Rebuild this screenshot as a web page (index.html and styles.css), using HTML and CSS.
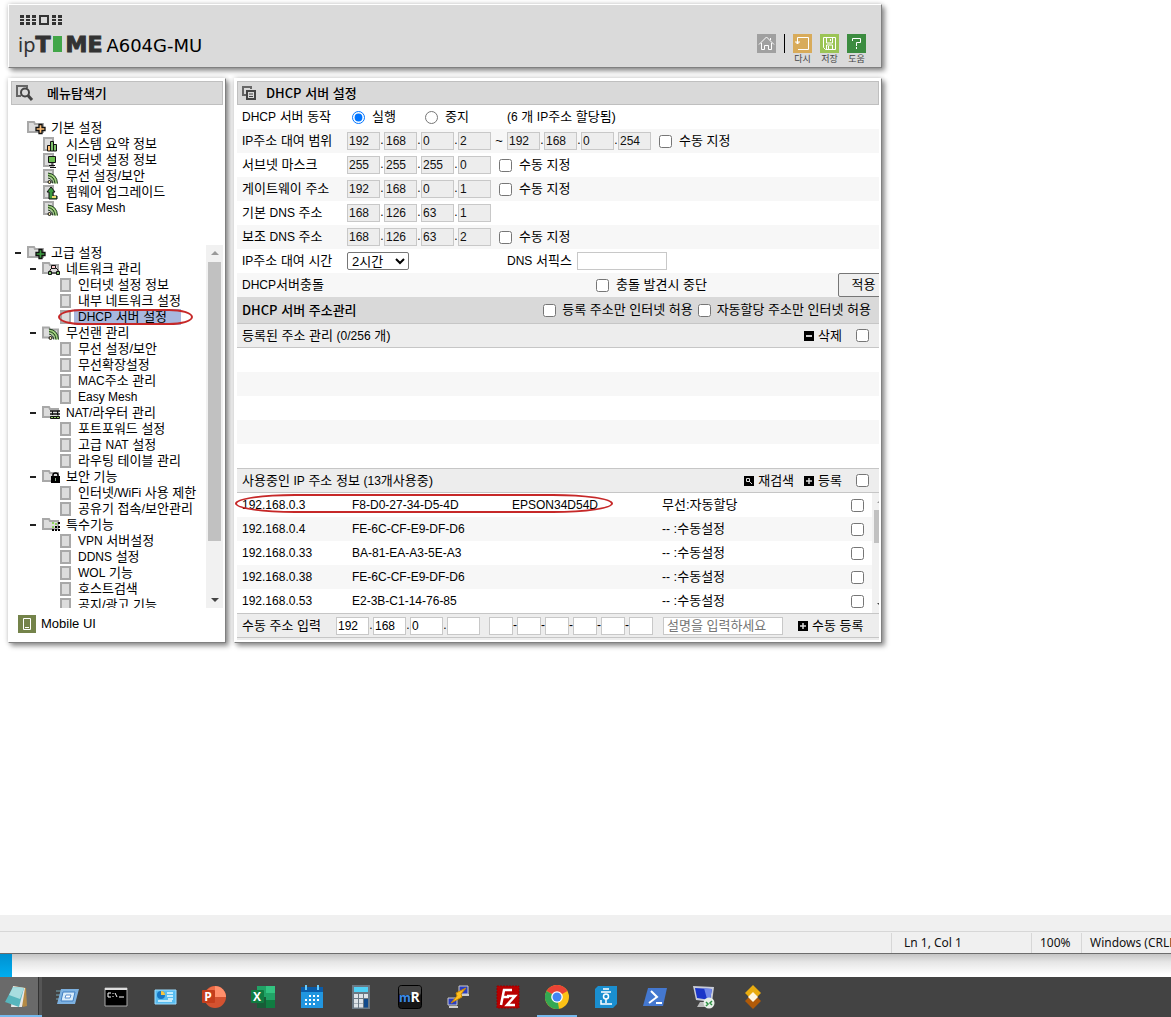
FILE: index.html
```html
<!DOCTYPE html>
<html lang="ko">
<head>
<meta charset="utf-8">
<title>ipTIME A604G-MU</title>
<link rel="stylesheet" href="styles.css">
</head>
<body>
<svg class="defs" aria-hidden="true">
  <defs>
    <symbol id="page" viewBox="0 0 11 14"><path d="M1 1h9v12H1z" fill="#dcdcdc" stroke="#a8a8a8" stroke-width="2"/></symbol>
    <symbol id="folder" viewBox="0 0 20 14"><path d="M1 1h6l1 2h8v8H1z" fill="#dcdcdc" stroke="#a8a8a8" stroke-width="2"/></symbol>
    <symbol id="sheet" viewBox="0 0 20 15"><path d="M2 1h9v12H2z" fill="#dcdcdc" stroke="#a8a8a8" stroke-width="2"/></symbol>
    <symbol id="waves" viewBox="0 0 20 15"><path d="M6 4q9 1 9.500 10.500H12Q11 9 6 8z" fill="#9fd07c"/><path d="M6 4q9 1 9.500 10.500M6 6.500q6.500 1 7 8M6 9q4.500 1 4.800 5.500" fill="none" stroke="#1c3a1c" stroke-width="1"/><circle cx="7.500" cy="13" r="1.500" fill="#f0e0a0" stroke="#111"/></symbol>
    <symbol id="plus" viewBox="0 0 20 14"><path d="M12 3.500h3v3h3v3h-3v3h-3v-3H9v-3h3z" stroke="#111" stroke-width="1.300"/></symbol>
    <symbol id="plusbox" viewBox="0 0 10 10"><path d="M0 0h10v10H0z" fill="#000"/><path d="M5 2v6M2 5h6" stroke="#ddd" stroke-width="1.500"/></symbol>
  </defs>
</svg>

<main class="desktop">
  <div class="router">
    <header class="top panel">
      <div class="brand">
        <svg class="dots" width="44" height="12" viewBox="0 0 44 12" fill="#333"><path d="M0 1h4v3H0zM6 1h4v3H6zM12 1h4v3h-4zM0 5h4v2H0zM6 5h4v2H6zM12 5h4v2h-4zM0 8h4v3H0zM6 8h4v3H6zM12 8h4v3h-4zM32 1h4v3h-4zM38 1h4v3h-4zM32 5h4v2h-4zM38 5h4v2h-4zM32 8h4v3h-4zM38 8h4v3h-4z"/><path d="M20 2h8v8h-8z" fill="none" stroke="#333" stroke-width="2"/></svg>
        <h1 class="logo"><span class="ip">ip</span><span class="time">T<span class="stem"></span>ME</span><span class="model">A604G-MU</span></h1>
      </div>
      <nav class="tools">
        <a href="#home" aria-label="홈"><svg width="19" height="19" viewBox="0 0 19 19" fill="none" stroke="#fff"><path d="M0 0h19v19H0z" fill="#a0a0a0" stroke="none"/><path d="M2 10.500 9.500 3l7.500 7.500M13.500 6V4M4.500 9v6.500h3v-4h4v4h3V9"/></svg></a>
        <span class="divider"></span>
        <a href="#refresh"><svg width="19" height="19" viewBox="0 0 19 19" fill="none" stroke="#fff"><path d="M0 0h19v19H0z" fill="#d8ab5a" stroke="none"/><path d="M4.500 10V3.500h11v12H5M2 8h5M3 9h3"/></svg>다시</a>
        <a href="#save"><svg width="19" height="19" viewBox="0 0 19 19" fill="none" stroke="#fff"><path d="M0 0h19v19H0z" fill="#9bc455" stroke="none"/><path d="M3.500 3.500h12v12h-10l-2-2zM6.500 4v5h6V4M6.500 15v-4h6v4M10.500 5v2M8.500 12v3"/></svg>저장</a>
        <a href="#help"><svg width="19" height="19" viewBox="0 0 19 19" fill="none" stroke="#fff"><path d="M0 0h19v19H0z" fill="#3c8c40" stroke="none"/><path d="M5.500 7V4.500h8v4h-4V12M9.500 13v2"/></svg>도움</a>
      </nav>
    </header>

    <div class="columns">
      <aside class="side panel">
        <h2 class="title"><svg width="18" height="16" viewBox="0 0 18 16" fill="none" stroke="#444" stroke-width="2"><path d="M5 11H1V1h10v2" stroke="#666"/><circle cx="9" cy="7.500" r="4"/><path d="m12 10.500 4 4.500" stroke-width="3"/></svg><span>메뉴탐색기</span></h2>
        <ul class="tree basic">
          <li class="root"><a href="#basic"><svg width="20" height="14"><use href="#folder"/><use href="#plus" fill="#ffc078"/></svg>기본 설정</a></li>
          <li class="mid"><a href="#summary"><svg width="20" height="15"><use href="#sheet"/><path d="M5.500 8.500h3V14h-3z" fill="#ffc078" stroke="#111"/><path d="M8.500 4.500h3V14h-3zM11.500 7.500h3V14h-3z" fill="#7dc06a" stroke="#111"/></svg>시스템 요약 정보</a></li>
          <li class="mid"><a href="#inet"><svg width="20" height="15"><use href="#sheet"/><path d="M6.500 3.500h7v6h-7z" fill="#6cbf50" stroke="#111"/><path d="M10 10v2M7 12.500h6M8 14.500h6" stroke="#111"/></svg>인터넷 설정 정보</a></li>
          <li class="mid"><a href="#wifi"><svg width="20" height="15"><use href="#sheet"/><use href="#waves"/></svg>무선 설정/보안</a></li>
          <li class="mid"><a href="#fw"><svg width="20" height="15"><use href="#sheet"/><path d="m9 2 4 5h-2v4h4v3H7V7H5z" fill="#3c9a40" stroke="#111"/><path d="M10 11h4v2h-4z" fill="#f0dc70"/></svg>펌웨어 업그레이드</a></li>
          <li class="mid"><a href="#mesh"><svg width="20" height="15"><use href="#sheet"/><use href="#waves"/></svg><span class="en">Easy Mesh</span></a></li>
        </ul>
        <div class="scroll">
          <ul class="tree">
            <li class="root"><i></i><a href="#adv"><svg width="20" height="14"><use href="#folder"/><use href="#plus" fill="#3c9a40"/></svg>고급 설정</a></li>
            <li class="mid"><i></i><a href="#net"><svg width="20" height="14"><use href="#folder"/><path d="M9.500 3.500h4v3h-4zM8 11V8l2-2M16 11V8l-2-2M9 11h6" fill="#fcc" stroke="#111"/><path d="M6.500 9.500h3v3h-3zM14.500 9.500h3v3h-3z" fill="#7dc06a" stroke="#111"/></svg>네트워크 관리</a></li>
            <li class="leaf"><a href="#a1"><svg width="11" height="14"><use href="#page"/></svg>인터넷 설정 정보</a></li>
            <li class="leaf"><a href="#a2"><svg width="11" height="14"><use href="#page"/></svg>내부 네트워크 설정</a></li>
            <li class="leaf current"><a href="#a3"><svg width="11" height="14"><use href="#page"/></svg><span class="pick"><span class="en">DHCP</span> 서버 설정</span></a><span class="ring"></span></li>
            <li class="mid"><i></i><a href="#wl"><svg width="20" height="15"><use href="#folder"/><use href="#waves" x="1" y="-1"/></svg>무선랜 관리</a></li>
            <li class="leaf"><a href="#b1"><svg width="11" height="14"><use href="#page"/></svg>무선 설정/보안</a></li>
            <li class="leaf"><a href="#b2"><svg width="11" height="14"><use href="#page"/></svg>무선확장설정</a></li>
            <li class="leaf"><a href="#b3"><svg width="11" height="14"><use href="#page"/></svg><span><span class="en">MAC</span>주소 관리</span></a></li>
            <li class="leaf"><a href="#b4"><svg width="11" height="14"><use href="#page"/></svg><span class="en">Easy Mesh</span></a></li>
            <li class="mid"><i></i><a href="#nat"><svg width="20" height="14"><use href="#folder"/><path d="M8 5h10M8 8h10" stroke="#111" stroke-width="1.500"/><path d="M10.500 5v4M15.500 5v4" stroke="#111"/><path d="M8.500 10.500h3v2h-3zM11.500 10.500h3v2h-3zM14.500 10.500h3v2h-3z" fill="#8fd060" stroke="#111"/></svg><span><span class="en">NAT/</span>라우터 관리</span></a></li>
            <li class="leaf"><a href="#c1"><svg width="11" height="14"><use href="#page"/></svg>포트포워드 설정</a></li>
            <li class="leaf"><a href="#c2"><svg width="11" height="14"><use href="#page"/></svg><span>고급 <span class="en">NAT</span> 설정</span></a></li>
            <li class="leaf"><a href="#c3"><svg width="11" height="14"><use href="#page"/></svg>라우팅 테이블 관리</a></li>
            <li class="mid"><i></i><a href="#sec"><svg width="20" height="14"><use href="#folder"/><path d="M9 6h9v7H9z"/><path d="M11 7V5q0-2 2.500-2T16 5v2" fill="none" stroke="#000" stroke-width="1.500"/><path d="M13.500 8v3" stroke="#8a8"/></svg>보안 기능</a></li>
            <li class="leaf"><a href="#d1"><svg width="11" height="14"><use href="#page"/></svg><span>인터넷<span class="en">/WiFi</span> 사용 제한</span></a></li>
            <li class="leaf"><a href="#d2"><svg width="11" height="14"><use href="#page"/></svg>공유기 접속/보안관리</a></li>
            <li class="mid"><i></i><a href="#sp"><svg width="20" height="14"><use href="#folder"/><path d="M10 4h2v2h-2zM10 8h2v2h-2zM13 5h2v2h-2z" fill="#8fd060"/><path d="M16 4h2v2h-2zM13 8h2v2h-2zM16 8h2v2h-2zM10 11h2v2h-2zM13 11h2v2h-2zM16 11h2v2h-2z"/></svg>특수기능</a></li>
            <li class="leaf"><a href="#e1"><svg width="11" height="14"><use href="#page"/></svg><span><span class="en">VPN</span> 서버설정</span></a></li>
            <li class="leaf"><a href="#e2"><svg width="11" height="14"><use href="#page"/></svg><span><span class="en">DDNS</span> 설정</span></a></li>
            <li class="leaf"><a href="#e3"><svg width="11" height="14"><use href="#page"/></svg><span><span class="en">WOL</span> 기능</span></a></li>
            <li class="leaf"><a href="#e4"><svg width="11" height="14"><use href="#page"/></svg>호스트검색</a></li>
            <li class="leaf"><a href="#e5"><svg width="11" height="14"><use href="#page"/></svg>공지/광고 기능</a></li>
          </ul>
          <div class="scrollbar"><span class="up"></span><span class="thumb"></span><span class="down"></span></div>
        </div>
        <a class="mobile" href="#mobile"><svg width="18" height="18" viewBox="0 0 18 18"><path d="M0 0h18v18H0z" fill="#74834a"/><path d="M5.500 3.500h7v11h-7zM7 12.500h4" fill="none" stroke="#fff"/></svg>Mobile UI</a>
      </aside>

      <section class="content panel">
        <h2 class="title"><svg width="14" height="14" viewBox="0 0 14 14" fill="none" stroke="#444" stroke-width="2"><path d="M4 9H1V1h8v2" stroke="#666"/><path d="M5 5h8v8H5z"/><path d="M7 8h4M7 10.500h4" stroke-width="1"/></svg><span>DHCP 서버 설정</span></h2>
        <form class="body">
          <div class="row">
            <span class="label"><span class="en">DHCP</span> 서버 동작</span>
            <label class="radio"><input type="radio" name="run" checked>실행</label>
            <label class="radio"><input type="radio" name="run">중지</label>
            <span class="note"><span class="en">(6</span> 개 <span class="en">IP</span>주소 할당됨)</span>
          </div>
          <div class="row alt">
            <span class="label"><span class="en">IP</span>주소 대여 범위</span>
            <span class="ip4"><input aria-label="시작 1" value="192" disabled>.<input aria-label="시작 2" value="168" disabled>.<input aria-label="시작 3" value="0" disabled>.<input aria-label="시작 4" value="2" disabled></span>
            <span class="tilde">~</span>
            <span class="ip4"><input aria-label="끝 1" value="192" disabled>.<input aria-label="끝 2" value="168" disabled>.<input aria-label="끝 3" value="0" disabled>.<input aria-label="끝 4" value="254" disabled></span>
            <label class="check"><input type="checkbox">수동 지정</label>
          </div>
          <div class="row">
            <span class="label">서브넷 마스크</span>
            <span class="ip4"><input aria-label="마스크 1" value="255" disabled>.<input aria-label="마스크 2" value="255" disabled>.<input aria-label="마스크 3" value="255" disabled>.<input aria-label="마스크 4" value="0" disabled></span>
            <label class="check"><input type="checkbox">수동 지정</label>
          </div>
          <div class="row alt">
            <span class="label">게이트웨이 주소</span>
            <span class="ip4"><input aria-label="게이트웨이 1" value="192" disabled>.<input aria-label="게이트웨이 2" value="168" disabled>.<input aria-label="게이트웨이 3" value="0" disabled>.<input aria-label="게이트웨이 4" value="1" disabled></span>
            <label class="check"><input type="checkbox">수동 지정</label>
          </div>
          <div class="row">
            <span class="label">기본 <span class="en">DNS</span> 주소</span>
            <span class="ip4"><input aria-label="기본 DNS 1" value="168" disabled>.<input aria-label="기본 DNS 2" value="126" disabled>.<input aria-label="기본 DNS 3" value="63" disabled>.<input aria-label="기본 DNS 4" value="1" disabled></span>
          </div>
          <div class="row alt">
            <span class="label">보조 <span class="en">DNS</span> 주소</span>
            <span class="ip4"><input aria-label="보조 DNS 1" value="168" disabled>.<input aria-label="보조 DNS 2" value="126" disabled>.<input aria-label="보조 DNS 3" value="63" disabled>.<input aria-label="보조 DNS 4" value="2" disabled></span>
            <label class="check"><input type="checkbox">수동 지정</label>
          </div>
          <div class="row">
            <label class="label" for="lease"><span class="en">IP</span>주소 대여 시간</label>
            <span class="lease"><select id="lease"><option>2시간</option></select></span>
            <label class="suffix"><span><span class="en">DNS</span> 서픽스</span><input type="text"></label>
          </div>
          <div class="row alt">
            <span class="label wide"><span class="en">DHCP</span>서버충돌</span>
            <label class="check"><input type="checkbox">충돌 발견시 중단</label>
            <div class="apply-box"><button class="apply" type="button">적용</button></div>
          </div>

          <div class="row section">
            <h3>DHCP 서버 주소관리</h3>
            <label class="check"><input type="checkbox">등록 주소만 인터넷 허용</label>
            <label class="check"><input type="checkbox">자동할당 주소만 인터넷 허용</label>
          </div>
          <div class="row bar">
            <span class="grow">등록된 주소 관리 <span class="en">(0/256</span> 개)</span>
            <button class="act" type="button"><svg width="10" height="10"><path d="M0 0h10v10H0z"/><path d="M2 5h6" stroke="#ccc" stroke-width="2"/></svg>삭제</button>
            <input type="checkbox" aria-label="모두 선택">
          </div>
          <div class="empty"></div>
          <div class="row bar lined">
            <span class="grow">사용중인 <span class="en">IP</span> 주소 정보 <span class="en">(13</span>개사용중)</span>
            <button class="act" type="button"><svg width="10" height="10"><path d="M0 0h10v10H0z"/><path d="M2.500 2.500h3v3h-3zM5 5l3 3" stroke="#ddd" fill="none"/></svg>재검색</button>
            <button class="act" type="button"><svg width="10" height="10"><use href="#plusbox"/></svg>등록</button>
            <input type="checkbox" aria-label="모두 선택">
          </div>
          <div class="leases">
            <table>
              <tr><td>192.168.0.3</td><td>F8-D0-27-34-D5-4D</td><td>EPSON34D54D</td><td class="ko">무선:자동할당</td><td><input type="checkbox" aria-label="192.168.0.3"></td></tr>
              <tr><td>192.168.0.4</td><td>FE-6C-CF-E9-DF-D6</td><td></td><td class="ko"><span class="en">--</span> :수동설정</td><td><input type="checkbox" aria-label="192.168.0.4"></td></tr>
              <tr><td>192.168.0.33</td><td>BA-81-EA-A3-5E-A3</td><td></td><td class="ko"><span class="en">--</span> :수동설정</td><td><input type="checkbox" aria-label="192.168.0.33"></td></tr>
              <tr><td>192.168.0.38</td><td>FE-6C-CF-E9-DF-D6</td><td></td><td class="ko"><span class="en">--</span> :수동설정</td><td><input type="checkbox" aria-label="192.168.0.38"></td></tr>
              <tr><td>192.168.0.53</td><td>E2-3B-C1-14-76-85</td><td></td><td class="ko"><span class="en">--</span> :수동설정</td><td><input type="checkbox" aria-label="192.168.0.53"></td></tr>
            </table>
            <div class="scrollbar slim"><span class="up"></span><span class="thumb"></span><span class="down"></span></div>
            <span class="ring"></span>
          </div>
          <div class="row manual">
            <span class="label">수동 주소 입력</span>
            <span class="ip4"><input aria-label="IP 1" value="192">.<input aria-label="IP 2" value="168">.<input aria-label="IP 3" value="0">.<input aria-label="IP 4"></span>
            <span class="mac"><input aria-label="MAC 1">-<input aria-label="MAC 2">-<input aria-label="MAC 3">-<input aria-label="MAC 4">-<input aria-label="MAC 5">-<input aria-label="MAC 6"></span>
            <input class="desc" type="text" aria-label="설명" placeholder="설명을 입력하세요">
            <button class="act" type="button"><svg width="10" height="10"><use href="#plusbox"/></svg>수동 등록</button>
          </div>
          <div class="base"></div>
        </form>
      </section>
    </div>
  </div>
</main>

<footer class="notepad">
  <div class="status"><span class="pos">Ln 1, Col 1</span><span class="zoom">100%</span><span class="eol">Windows (CRLF)</span></div>
</footer>
<div class="wallpaper"><span></span></div>

<nav class="taskbar" aria-label="작업 표시줄">
  <button class="first" aria-label="메모장"><svg viewBox="0 0 24 24"><path d="m8 2 13 2 1 18-4 1z" fill="#b58a45"/><path d="m8 2 12 2-3 19H6z" fill="#e8e8e8"/><path d="M8 3 0 18l14 5 5-19z" fill="#57b5bd"/><path d="M8 3 4 11l11 4 4-11z" fill="#a8dde0"/></svg></button>
  <button aria-label="실행"><svg viewBox="0 0 24 24"><path d="M1 6h6M1 10h5M1 14h4" stroke="#7ab"/><path d="M6 4h18l-4 15H2z" fill="#7db1e0"/><path d="M8 7h12l-2 9H6z" fill="#d8ecfa" stroke="#3f7dc0"/><path d="M11 10h5l-1 3h-5z" fill="#fff" stroke="#5a8fd0"/></svg></button>
  <button aria-label="명령 프롬프트"><svg viewBox="0 0 24 24"><path d="M1 3h22v18H1z" fill="#000" stroke="#aaa"/><path d="M1 3h22v2H1z" fill="#ddd"/><path d="M7 8H4v4h3M9 8v1m0 2v1M11 8l2 4M15 12h5" fill="none" stroke="#fff"/></svg></button>
  <button aria-label="제어판"><svg viewBox="0 0 24 24"><path d="M2 5h21v14H2z" fill="#58bcf0" stroke="#9bdcff"/><circle cx="8" cy="10" r="4" fill="#1676c4"/><path d="M8 10V6a4 4 0 0 1 4 4z" fill="#f5c542"/><path d="M14 8h6M14 11h6M15 14h5M5 16h14" stroke="#e8faff" stroke-width="1.500"/></svg></button>
  <button aria-label="PowerPoint"><svg viewBox="0 0 24 24"><circle cx="13" cy="12" r="11" fill="#d35230"/><path d="M13 1a11 11 0 0 1 11 11H13z" fill="#ff8f6b"/><path d="M13 1v11H3A11 11 0 0 1 13 1" fill="#ed6c47"/><rect y="5" width="13" height="13" rx="1" fill="#c43e1c"/><text x="6" y="16" class="glyph">P</text></svg></button>
  <button aria-label="Excel"><svg viewBox="0 0 24 24"><path d="M6 1h18v22H6z" fill="#21a366"/><path d="M15 1h9v7h-9z" fill="#33c481"/><path d="M6 12h9v11H6z" fill="#185c37"/><path d="M15 15h9v8h-9z" fill="#107c41"/><rect y="5" width="13" height="13" rx="1" fill="#107c41"/><text x="6" y="16" class="glyph">X</text></svg></button>
  <button aria-label="일정"><svg viewBox="0 0 24 24"><path d="M1 2h22v21H1z" fill="#2196e0"/><path d="M1 2h22v5H1z" fill="#0b5ca8"/><path d="M6 0v5M18 0v5" stroke="#6cf" stroke-width="2"/><path d="M9 11h11M5 15h15M5 19h11" stroke="#fff" stroke-width="2" stroke-dasharray="2 2"/></svg></button>
  <button aria-label="계산기"><svg viewBox="0 0 24 24"><path d="M3 0h18v24H3z" fill="#6a7884"/><path d="M5 2h14v5H5z" fill="#50d0f5"/><path d="M5 11h4m1 0h4m1 0h4M5 16h4m1 0h4M5 20.500h4m1 0h4" stroke="#dde3e8" stroke-width="4"/><path d="M15 14h4v8.500h-4z" fill="#104a8c"/></svg></button>
  <button aria-label="mRemote"><svg viewBox="0 0 24 24"><rect x=".5" y=".5" width="23" height="23" rx="3" fill="#161616" stroke="#000"/><rect x="1" y="1" width="22" height="9" rx="2" fill="#444"/><text x="7" y="17" class="glyph blue">m</text><text x="17" y="17" class="glyph big">R</text></svg></button>
  <button aria-label="PuTTY"><svg viewBox="0 0 24 24"><path d="M12 1h9v8h-9zM1 13h9v7H1z" fill="#2b3fc0" stroke="#ccc"/><path d="M13 10h9M2 22h9" stroke="#ccc" stroke-width="2"/><path d="m19 3-10 5 1 3-6 7 11-6-1-3z" fill="#ffc020" stroke="#c80"/></svg></button>
  <button aria-label="FileZilla"><svg viewBox="0 0 24 24"><path d="M1 1h22v22H1z" fill="#b80000" stroke="#900" stroke-dasharray="2 1"/><path d="m5 20 3-15h8M7 12h6M11 11h8l-8 9h8" fill="none" stroke="#fff" stroke-width="2.500"/></svg></button>
  <button class="open" aria-label="Chrome"><svg viewBox="0 0 24 24"><circle cx="12" cy="12" r="12" fill="#fbc116"/><path d="M12 12 1.600 6A12 12 0 0 1 22.400 6z" fill="#ea4335"/><path d="m12 12 2 11.800A12 12 0 0 1 1.600 6z" fill="#34a853"/><circle cx="12" cy="12" r="5.800" fill="#fff"/><circle cx="12" cy="12" r="4.500" fill="#4285f4"/></svg></button>
  <button aria-label="한글"><svg viewBox="0 0 24 24"><path d="M4 1h19v18l-4 4H1V4z" fill="#1a8fd0"/><path d="M9 4h6M7 7h10M12 14v4M7 15v4h11" fill="none" stroke="#fff" stroke-width="1.500"/><circle cx="12" cy="11.500" r="2.500" fill="none" stroke="#fff" stroke-width="1.500"/></svg></button>
  <button aria-label="PowerShell"><svg viewBox="0 0 24 24"><path d="M5 3h19l-4 18H0z" fill="#4478d0"/><path d="m8 6 6 6-8 6M13 18h6" fill="none" stroke="#fff" stroke-width="2"/></svg></button>
  <button aria-label="원격 데스크톱"><svg viewBox="0 0 24 24"><path d="m1 1 21 1-2 15-16-2z" fill="#c8ccd8"/><path d="m3 3 17 1-2 11-13-2z" fill="#1a35c8"/><path d="m12 3 8 1-2 11-3-1z" fill="#7088e8"/><path d="M8 17h7l3 5H5z" fill="#bbb"/><circle cx="17" cy="18" r="5.500" fill="#e8f0e8"/><path d="m14 17 2 2-2 2m6-5-2 2 2 2" fill="none" stroke="#2a9040" stroke-width="1.500"/></svg></button>
  <button aria-label="VMware"><svg viewBox="0 0 24 24"><path d="m12 8 8 8-8 8-8-8z" fill="#b05a08"/><path d="m12 0 8 8-8 8-8-8z" fill="#e8ac10"/><path d="m12 7 5 5-5 5-5-5z" fill="#fff8e0"/></svg></button>
</nav>
</body>
</html>
```
FILE: styles.css
```css
* { box-sizing: border-box; }

body {
  margin: 0;
  min-height: 100vh;
  display: flex;
  flex-direction: column;
  overflow-x: hidden;
  background: #fff;
  color: #000;
  font: 13px/16px "Liberation Sans", "Noto Sans CJK KR", sans-serif;
}

.defs { position: absolute; width: 0; height: 0; }
a { color: inherit; text-decoration: none; }
ul { list-style: none; margin: 0; padding: 0; }
svg { flex: none; }
input, select, button { font: inherit; color: inherit; }
input[type="checkbox"], input[type="radio"] { width: 13px; height: 13px; margin: 0; flex: none; }
.en { font-size: 12px; }

/* Router admin page */
.desktop { flex: 1; padding: 4px 8px 0; }
.router { max-width: 874px; display: flex; flex-direction: column; gap: 10px; }
.columns { display: flex; gap: 8px; }

.panel {
  border: 1px solid;
  border-color: #fff #808080 #808080 #fff;
  box-shadow: 0 0 5px rgba(0, 0, 0, .2), 3px 3px 5px rgba(0, 0, 0, .4);
}

.top {
  display: flex;
  justify-content: space-between;
  align-items: flex-start;
  padding: 9px 15px 2px 11px;
  background: #dadada;
}
.brand { display: flex; flex-direction: column; gap: 7px; }
.logo { display: flex; align-items: baseline; margin: 0 0 0 -2px; font-weight: 400; color: #333; line-height: 24px; }
.ip { font: 20px/24px "Noto Sans", sans-serif; }
.time { font: 700 22px/24px "DejaVu Sans", sans-serif; -webkit-text-stroke: 1px #333; }
.stem { display: inline-block; width: 9px; height: 16px; margin: 0 3px; background: #42a648; }
.model { font: 18px/24px "DejaVu Sans", sans-serif; color: #000; margin-left: 4px; }
.tools { display: flex; gap: 8px; padding-top: 20px; color: #444; font-size: 9px; line-height: 12px; }
.tools a { display: flex; flex-direction: column; align-items: center; }
.divider { width: 1px; height: 19px; background: #000; }

.side, .content { background: #fff; padding: 2px; }
.side { flex: 0 0 218px; }
.content { flex: 1; min-width: 0; }

.title {
  display: flex;
  align-items: center;
  height: 24px;
  margin: 0;
  padding-left: 4px;
  border: 1px solid #bfbfbf;
  background: #d9d9d9;
  font: 500 13px/16px "Noto Sans CJK KR", sans-serif;
}
.side .title { gap: 13px; }
.content .title { gap: 10px; }

/* Menu tree */
.tree li { display: flex; align-items: center; height: 16px; position: relative; white-space: nowrap; }
.tree i { width: 6px; height: 2px; margin-right: 6px; background: #222; }
.tree a { display: flex; align-items: center; gap: 4px; }
.tree .root { padding-left: 4px; }
.tree .mid { padding-left: 19px; }
.tree .leaf { padding-left: 49px; }
.tree .leaf a { gap: 7px; }
.tree.basic { padding: 15px 0 29px; }
.tree.basic .root { padding-left: 16px; }
.tree.basic .mid { padding-left: 31px; }
.pick { background: #a8b8de; padding: 0 14px 0 4px; margin-left: -4px; }
.ring { position: absolute; border: 2px solid #c62828; pointer-events: none; }
.tree .ring { left: 47px; top: 0; width: 135px; height: 16px; border-radius: 24px / 50%; }
.scroll { display: flex; height: 363px; overflow: hidden; }
.scroll .tree { flex: 1; min-width: 0; }

.scrollbar {
  flex: 0 0 17px;
  display: flex;
  flex-direction: column;
  align-items: center;
  padding: 6px 2px;
  background: #f1f1f1;
}
.up, .down { border: 4px solid transparent; }
.up { border-top: 0; border-bottom-color: #999; margin-bottom: 7px; }
.down { border-bottom: 0; border-top-color: #444; margin-top: auto; }
.thumb { width: 13px; height: 279px; background: #c1c1c1; }

.mobile { display: flex; align-items: center; gap: 5px; height: 32px; padding-left: 7px; }

/* DHCP settings */
.row { display: flex; align-items: center; height: 24px; padding-left: 5px; white-space: nowrap; overflow: hidden; }
.alt { background: #f7f7f7; }
.label { flex: 0 0 105px; }
.label.wide { flex-basis: 354px; }
.radio, .check { display: flex; align-items: center; }
.radio { gap: 7px; padding-left: 5px; width: 73px; }
.note { margin-left: 14px; }
.check { gap: 7px; margin-left: 8px; }
.wide + .check { margin-left: 0; }
.ip4, .mac { display: flex; justify-content: space-between; font-size: 12px; }
.ip4 { width: 144px; }
.ip4 input, .mac input, .desc, .suffix input {
  width: 33px;
  height: 18px;
  padding: 0 1px;
  border: 1px solid #c8c8c8;
  background: #fff;
  line-height: 16px;
}
.ip4 input:disabled { background: #ededed; color: #111; }
.tilde { width: 16px; text-align: center; }
.lease { flex: 0 0 160px; display: flex; }
.lease select { width: 62px; height: 18px; padding: 0; border: 1px solid #767676; border-radius: 2px; background: #fff; }
.suffix { display: flex; align-items: center; gap: 5px; }
.suffix input { width: 90px; }
.apply-box { flex: 1; display: flex; justify-content: flex-end; overflow: hidden; }
.apply { width: 51px; height: 24px; margin-right: -10px; border: 1px solid #767676; border-radius: 2px; background: #efefef; }

.section { height: 27px; padding-right: 8px; background: #d9d9d9; border-bottom: 1px solid #c6c6c6; }
.section h3 { flex: 1; margin: 0; font: 500 13px/16px "Noto Sans CJK KR", sans-serif; }
.section .check { gap: 6px; margin-left: 5px; }
.bar { padding-right: 10px; background: #ededed; border-bottom: 1px solid #c6c6c6; }
.bar.lined { height: 25px; border-top: 1px solid #c6c6c6; }
.grow { flex: 1; }
.act { display: flex; align-items: center; gap: 4px; padding: 0; border: 0; background: none; margin-left: 10px; }
.act + input[type="checkbox"] { margin-left: 14px; }
.empty { height: 120px; background: repeating-linear-gradient(#fff 0 24px, #f7f7f7 24px 48px); }

.leases { position: relative; display: flex; }
.leases table { flex: 1; border-collapse: collapse; table-layout: fixed; font-size: 12px; }
.leases tr { height: 24px; }
.leases tr:nth-child(even) { background: #f7f7f7; }
.leases td { padding: 0 0 0 5px; width: 110px; white-space: nowrap; }
.leases td:nth-child(2) { width: 160px; }
.leases td:nth-child(3) { width: 150px; }
.leases td:nth-child(4) { width: 189px; }
.leases td:nth-child(5) { width: auto; }
.leases td input { display: block; }
.leases .ko { font-size: 13px; }
.slim { flex-basis: 7px; overflow: hidden; align-items: flex-start; }
.slim .up, .slim .down { margin-left: 3px; }
.slim .thumb { height: 33px; }
.leases .ring { left: -2px; top: 1px; width: 378px; height: 19px; border-radius: 60px / 50%; }

.manual { height: 25px; background: #ededed; border: solid #c6c6c6; border-width: 1px 0; }
.manual .label { flex-basis: 94px; }
.mac { width: 164px; margin-left: 9px; }
.mac input { width: 24px; }
.desc.desc { width: 120px; margin-left: 10px; padding: 0 3px; }
.desc::placeholder { color: #757575; }
.manual .act { margin-left: 15px; }
.base { height: 2px; background: #ededed; }

/* Editor window edge and task bar */
.notepad { height: 39px; padding-top: 16px; background: #f0f0f0; border-bottom: 1px solid #6c6c6c; }
.status { display: flex; justify-content: flex-end; height: 22px; border-top: 1px solid #d7d7d7; padding-top: 1px; font: 12px/20px "Noto Sans", sans-serif; color: #111; overflow: hidden; }
.status span { flex: none; border-left: 1px solid #d7d7d7; padding-left: 8px; white-space: nowrap; }
.status .pos { width: 140px; padding-left: 12px; }
.status .zoom { width: 50px; }
.status .eol { width: 90px; overflow: hidden; }
.wallpaper { height: 23px; background: linear-gradient(#c4c4c4, #e6e6e6 35%, #fff 90%); }
.wallpaper span { display: block; width: 12px; height: 100%; background: linear-gradient(#0090d0, #00aef0); }

.taskbar { display: flex; height: 40px; background: #434343; overflow: hidden; }
.taskbar button { flex: 0 0 49px; display: flex; justify-content: center; align-items: center; padding: 0; border: 0; background: none; }
.taskbar svg { width: 24px; height: 24px; }
.taskbar .first { flex-basis: 42px; padding-right: 8px; background: linear-gradient(90deg, #6a6a6a 38px, #333 38px 39px, #555 39px); border-bottom: 2px solid #76b9ed; }
.taskbar .open { background: linear-gradient(#76b9ed, #76b9ed) center bottom / 40px 2px no-repeat; }
.glyph { font: 700 12px "Open Sans", sans-serif; fill: #fff; text-anchor: middle; }
.blue { fill: #3a8ae8; }
.big { font-size: 14px; }
```
